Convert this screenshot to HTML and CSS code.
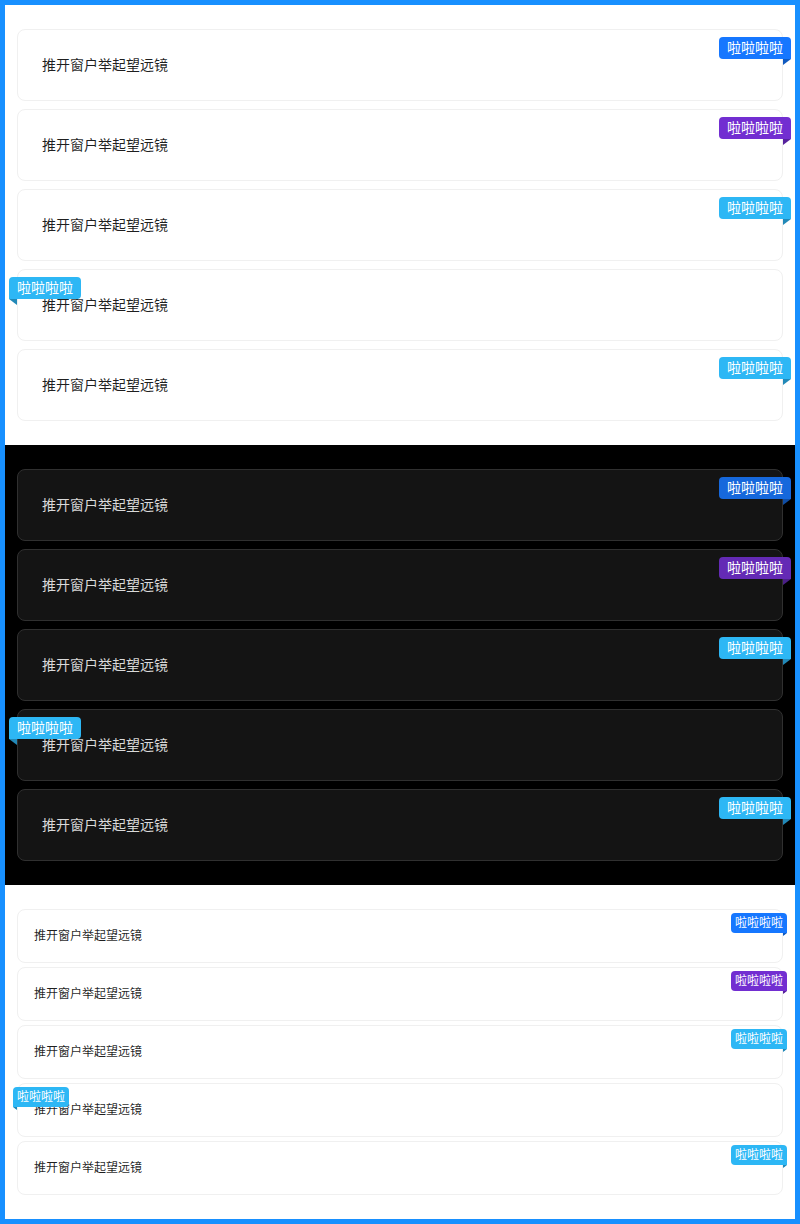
FILE: index.html
```html
<!DOCTYPE html>
<html lang="zh-CN">
<head>
<meta charset="utf-8">
<title>Badge.Ribbon</title>
<link rel="stylesheet" href="styles.css">
</head>
<body>
<div class="frame">
  <section class="panel theme-light">
    <div class="ribbon-wrap"><div class="card">推开窗户举起望远镜</div><div class="ribbon end blue">啦啦啦啦<span class="corner"></span></div></div>
    <div class="ribbon-wrap"><div class="card">推开窗户举起望远镜</div><div class="ribbon end purple">啦啦啦啦<span class="corner"></span></div></div>
    <div class="ribbon-wrap"><div class="card">推开窗户举起望远镜</div><div class="ribbon end sky">啦啦啦啦<span class="corner"></span></div></div>
    <div class="ribbon-wrap"><div class="card">推开窗户举起望远镜</div><div class="ribbon start sky">啦啦啦啦<span class="corner"></span></div></div>
    <div class="ribbon-wrap"><div class="card">推开窗户举起望远镜</div><div class="ribbon end sky">啦啦啦啦<span class="corner"></span></div></div>
  </section>
  <section class="panel theme-dark">
    <div class="ribbon-wrap"><div class="card">推开窗户举起望远镜</div><div class="ribbon end blue">啦啦啦啦<span class="corner"></span></div></div>
    <div class="ribbon-wrap"><div class="card">推开窗户举起望远镜</div><div class="ribbon end purple">啦啦啦啦<span class="corner"></span></div></div>
    <div class="ribbon-wrap"><div class="card">推开窗户举起望远镜</div><div class="ribbon end sky">啦啦啦啦<span class="corner"></span></div></div>
    <div class="ribbon-wrap"><div class="card">推开窗户举起望远镜</div><div class="ribbon start sky">啦啦啦啦<span class="corner"></span></div></div>
    <div class="ribbon-wrap"><div class="card">推开窗户举起望远镜</div><div class="ribbon end sky">啦啦啦啦<span class="corner"></span></div></div>
  </section>
  <section class="panel theme-light theme-compact">
    <div class="ribbon-wrap"><div class="card">推开窗户举起望远镜</div><div class="ribbon end blue">啦啦啦啦<span class="corner"></span></div></div>
    <div class="ribbon-wrap"><div class="card">推开窗户举起望远镜</div><div class="ribbon end purple">啦啦啦啦<span class="corner"></span></div></div>
    <div class="ribbon-wrap"><div class="card">推开窗户举起望远镜</div><div class="ribbon end sky">啦啦啦啦<span class="corner"></span></div></div>
    <div class="ribbon-wrap"><div class="card">推开窗户举起望远镜</div><div class="ribbon start sky">啦啦啦啦<span class="corner"></span></div></div>
    <div class="ribbon-wrap"><div class="card">推开窗户举起望远镜</div><div class="ribbon end sky">啦啦啦啦<span class="corner"></span></div></div>
  </section>
</div>
</body>
</html>
```
FILE: styles.css
```css
html, body {
  margin: 0;
  padding: 0;
}
body {
  font-family: -apple-system, BlinkMacSystemFont, "Segoe UI", Roboto, "Helvetica Neue", Arial, "Noto Sans", "Noto Sans CJK SC", sans-serif;
}
.frame {
  border: 5px solid #1890ff;
  height: 1224px;
  box-sizing: border-box;
}
.panel {
  display: flex;
  flex-direction: column;
  gap: 8px;
  padding: 24px 12px;
}
.theme-light {
  background: #ffffff;
}
.theme-dark {
  background: #000000;
}
.ribbon-wrap {
  position: relative;
}
.card {
  border-radius: 8px;
  padding: 24px;
  font-size: 14px;
  line-height: 22px;
}
.theme-light .card {
  background: #ffffff;
  border: 1px solid #f0f0f0;
  color: rgba(0, 0, 0, 0.88);
}
.theme-dark .card {
  background: #141414;
  border: 1px solid #303030;
  color: rgba(255, 255, 255, 0.85);
}
.ribbon {
  position: absolute;
  top: 8px;
  height: 22px;
  line-height: 22px;
  padding: 0 8px;
  border-radius: 4px;
  font-size: 14px;
  color: #ffffff;
  white-space: nowrap;
}
.ribbon.end {
  right: -8px;
  border-bottom-right-radius: 0;
}
.ribbon.start {
  left: -8px;
  border-bottom-left-radius: 0;
}
.corner {
  position: absolute;
  top: 100%;
  width: 8px;
  height: 8px;
  box-sizing: border-box;
  border: 4px solid;
  transform: scaleY(0.75);
  transform-origin: top;
  filter: brightness(75%);
}
.ribbon.end .corner {
  right: 0;
  border-right-color: transparent;
  border-bottom-color: transparent;
}
.ribbon.start .corner {
  left: 0;
  border-left-color: transparent;
  border-bottom-color: transparent;
}
.blue { background: #1677ff; }
.blue .corner { color: #1677ff; }
.purple { background: #722ed1; }
.purple .corner { color: #722ed1; }
.sky { background: #2db7f5; }
.sky .corner { color: #2db7f5; }
.theme-dark .blue { background: #1668dc; }
.theme-dark .blue .corner { color: #1668dc; }
.theme-dark .purple { background: #642ab5; }
.theme-dark .purple .corner { color: #642ab5; }

.theme-compact {
  gap: 4px;
}
.theme-compact .card {
  padding: 16px;
  font-size: 12px;
  line-height: 20px;
}
.theme-compact .ribbon {
  top: 4px;
  height: 20px;
  line-height: 20px;
  padding: 0 4px;
  font-size: 12px;
}
.theme-compact .ribbon.end {
  right: -4px;
}
.theme-compact .ribbon.start {
  left: -4px;
}
.theme-compact .corner {
  width: 4px;
  height: 4px;
  border-width: 2px;
}
```
